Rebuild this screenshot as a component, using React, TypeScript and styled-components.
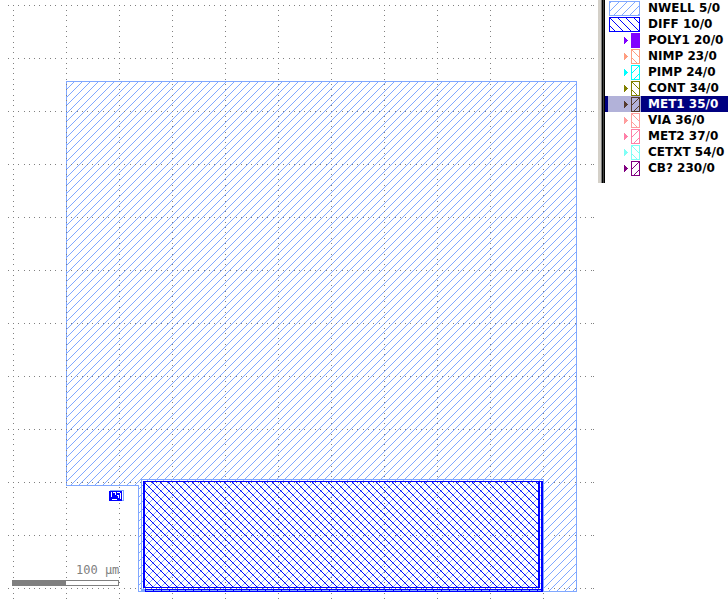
import React from 'react';
import styled, { createGlobalStyle } from 'styled-components';

const GlobalStyle = createGlobalStyle`
  body { margin: 0; background: #fff; overflow: hidden; }
`;
const Page = styled.main`
  display: flex;
  align-items: flex-start;
  height: 100vh;
  overflow: hidden;
`;
const Canvas = styled.section`
  flex: 1;
  min-width: 0;
  height: 100%;
  svg { display: block; }
`;
const LayerPanel = styled.aside`
  display: flex;
  flex: none;
  width: 130px;
`;
const Splitter = styled.div`
  width: 7px;
  box-sizing: border-box;
  background: linear-gradient(90deg, #d4d0c8 0 3px, #808080 3px 4px, #000 4px 5px, #404040 5px 6px, #000 6px);
`;
const LayerList = styled.ul`
  flex: 1;
  margin: 0;
  padding: 0 0 7px;
  list-style: none;
`;
const LayerRow = styled.li<{ $selected?: boolean }>`
  height: 16px;
  background: ${p => (p.$selected ? '#000080' : 'transparent')};
`;
const LayerButton = styled.button<{ $selected?: boolean }>`
  display: flex;
  align-items: center;
  width: 100%;
  height: 16px;
  padding: 0 0 0 3px;
  border: 0;
  background: none;
  color: ${p => (p.$selected ? '#fff' : '#000')};
  font: bold 12px/16px "DejaVu Sans", sans-serif;
  white-space: nowrap;
`;
const Swatch = styled.span<{ $selected?: boolean }>`
  flex: none;
  width: 33px;
  height: 16px;
  margin-right: 7px;
  background: ${p => (p.$selected ? '#b2b2d9' : 'transparent')};
  svg { display: block; }
`;

type Slant = 'up' | 'down' | 'solid';
type Layer = { name: string; color: string; slant: Slant; wide?: boolean; selected?: boolean };
const layers: Layer[] = [
  { name: 'NWELL 5/0', color: '#80a8ff', slant: 'up', wide: true },
  { name: 'DIFF 10/0', color: '#0000ff', slant: 'down', wide: true },
  { name: 'POLY1 20/0', color: '#8000ff', slant: 'solid' },
  { name: 'NIMP 23/0', color: '#ff9d80', slant: 'down' },
  { name: 'PIMP 24/0', color: '#00ffff', slant: 'up' },
  { name: 'CONT 34/0', color: '#808000', slant: 'down' },
  { name: 'MET1 35/0', color: '#553a2c', slant: 'up', selected: true },
  { name: 'VIA 36/0', color: '#ff9d9d', slant: 'down' },
  { name: 'MET2 37/0', color: '#ff80a8', slant: 'up' },
  { name: 'CETXT 54/0', color: '#80fff6', slant: 'down' },
  { name: 'CB? 230/0', color: '#800080', slant: 'up' },
];

function hatchPixels(x: number, y: number, w: number, h: number, slant: Slant, phase: number) {
  let d = '';
  for (let j = y; j < y + h; j++)
    for (let i = x; i < x + w; i++) {
      const k = slant === 'up' ? i + j : i - j + 800;
      if (slant === 'solid' || k % 8 === phase) d += `M${i} ${j}h1v1h-1z`;
    }
  return d;
}

function LayerIcon({ color, slant, wide }: Layer) {
  const left = wide ? 1 : 23;
  const width = wide ? 31 : 9;
  const phase = slant === 'up' ? (wide ? 4 : 0) : wide ? 0 : 6;
  return (
    <svg width="33" height="16" shapeRendering="crispEdges" aria-hidden="true">
      <rect x={left + 0.5} y="1.5" width={width - 1} height="14" fill="none" stroke={color} />
      <path fill={color} d={hatchPixels(left + 1, 2, width - 2, 13, slant, phase)} />
      {!wide && <path fill={color} d="M16 5h1v1h1v1h1v1h1v1h-1v1h-1v1h-1v1h-1z" />}
    </svg>
  );
}

function gridPath() {
  let d = '';
  const across = (n: number) => Math.ceil((n * 53) / 10 - 0.5);
  const down = (n: number) => Math.floor((n * 53) / 10);
  for (let r = 0; r < 12; r++) {
    for (let n = -1; n < 110; n++) d += `M${13 + across(n)} ${5 + r * 53}h1v1h-1z`;
    d += `M593 ${5 + r * 53}h1v1h-1z`;
  }
  for (let c = 0; c < 11; c++)
    for (let n = 0; n < 113; n++) d += `M${13 + c * 53} ${5 + down(n)}h1v1h-1z`;
  return d;
}

const ScaleText = styled.text`
  font: 12px "DejaVu Sans Mono", monospace;
  fill: #808080;
`;

function ChipLayout() {
  return (
    <svg width="598" height="601" shapeRendering="crispEdges" role="img" aria-label="Chip layout">
      <defs>
        <pattern id="well" width="8" height="8" patternUnits="userSpaceOnUse">
          <path fill="#80a8ff" d={hatchPixels(0, 0, 8, 8, 'up', 3)} />
        </pattern>
        <pattern id="diff" width="8" height="8" patternUnits="userSpaceOnUse">
          <path fill="#0000ff" d={hatchPixels(0, 0, 8, 8, 'down', 6)} />
        </pattern>
      </defs>
      <path d="M66.5 81.5H576.5V591.5H138.5V485.5H66.5z" fill="url(#well)" stroke="#80a8ff" />
      <path d={gridPath()} fill="#808080" />
      <path d="M141.5 591V479.5H543.5V591" fill="none" stroke="#80a8ff" />
      <rect x="142" y="589" width="3" height="3" fill="#80a8ff" />
      <rect x="144" y="482" width="395" height="106" fill="url(#diff)" />
      <g fill="#0000ff">
        <rect x="143" y="481" width="400" height="1" />
        <rect x="143" y="481" width="2" height="107" />
        <rect x="143" y="587" width="397" height="1" />
        <rect x="538" y="481" width="2" height="107" />
        <rect x="541" y="481" width="2" height="111" />
        <rect x="145" y="589" width="398" height="1" />
        <rect x="145" y="591" width="398" height="1" />
        <rect x="145" y="590" width="1" height="1" />
      </g>
      <path d="M146 590.5h395" stroke="#80a8ff" strokeDasharray="7 1" />
      <path d="M146 590.5h395" stroke="#0000ff" strokeDasharray="1 7" strokeDashoffset="1" />
      <rect x="110" y="490" width="14" height="11" fill="#80a8ff" />
      <rect x="122" y="491" width="1" height="9" fill="#fff" />
      <rect x="109" y="491" width="13" height="10" fill="#0000ff" />
      <path
        d="M111 492h1v5h-1zM113 492h2v1h-2zM115 492h1v3h-1zM117 492h3v1h-3zM117 495h1v1h-1zM120 493h1v6h-1zM118 495h1v3h-1zM112 499h5v1h-5z"
        fill="#fff"
      />
      <ScaleText x="76" y="574">100 µm</ScaleText>
      <rect x="12.5" y="580.5" width="106" height="5" fill="#fff" stroke="#808080" />
      <rect x="12" y="580" width="54" height="6" fill="#808080" />
    </svg>
  );
}

export default function App() {
  return (
    <>
      <GlobalStyle />
      <Page>
        <Canvas><ChipLayout /></Canvas>
        <LayerPanel aria-label="Layers">
          <Splitter />
          <LayerList>
            {layers.map(layer => (
              <LayerRow key={layer.name} $selected={layer.selected}>
                <LayerButton type="button" $selected={layer.selected} aria-pressed={!!layer.selected}>
                  <Swatch $selected={layer.selected}><LayerIcon {...layer} /></Swatch>
                  {layer.name}
                </LayerButton>
              </LayerRow>
            ))}
          </LayerList>
        </LayerPanel>
      </Page>
    </>
  );
}
